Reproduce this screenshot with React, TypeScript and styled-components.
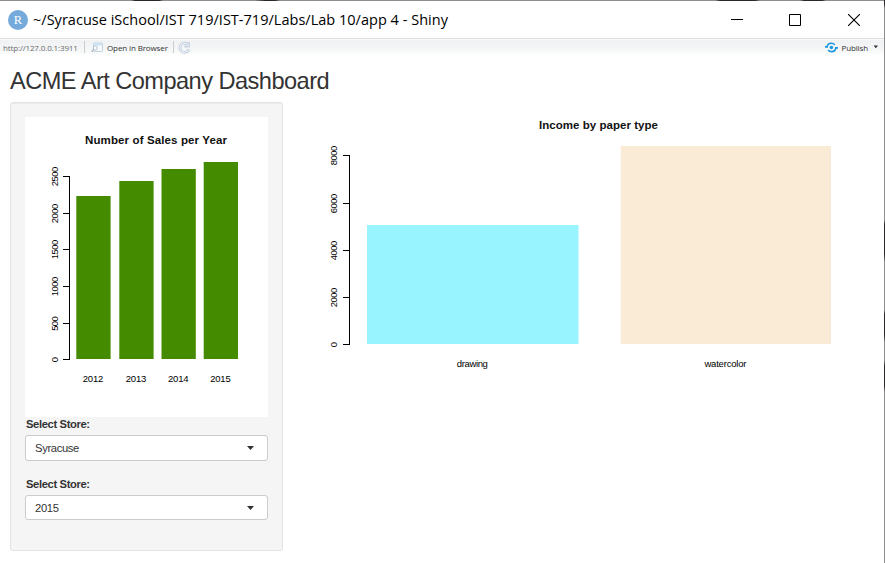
import React from "react";
import styled, { createGlobalStyle } from "styled-components";

const GlobalStyle = createGlobalStyle`
  html, body { margin: 0; padding: 0; background: #fff; overflow: hidden; }
  * { box-sizing: border-box; }
  svg { display: block; flex: none; }
`;

const Desktop = styled.div`
  width: 885px;
  height: 563px;
  padding: 1px 1px 0 0;
  background:
    linear-gradient(to right, #8e8e8e 0 131px, #2b2729 135px 159px, #8e8e8e 163px 255px, #2b2729 265px 275px, #8e8e8e 280px 715px, #2b2729 720px 755px, #8e8e8e 760px 800px, #2b2729 804px 822px, #8e8e8e 826px) 0 0 / 884px 1px no-repeat,
    linear-gradient(to bottom, #2b2729 0 4px, #8e8e8e 8px 220px, #2b2729 224px 254px, #8e8e8e 262px 310px, #2b2729 314px 335px, #8e8e8e 342px 360px, #2b2729 366px 386px, #8e8e8e 392px);
`;

const Window = styled.main`
  display: flex;
  flex-direction: column;
  height: 562px;
  background: #fff;
`;

const TitleBar = styled.header`
  display: flex;
  align-items: center;
  height: 37px;
  padding-left: 8px;
`;

const WindowTitle = styled.div`
  flex: 1;
  margin-left: 5px;
  font: 14.5px/20px "Open Sans", sans-serif;
  letter-spacing: 0.02px;
  color: #000;
  white-space: nowrap;
`;

const CaptionButtons = styled.div`
  display: grid;
  grid-template-columns: 58px 59px 12px;
  margin-right: 24px;
`;

const CaptionButton = styled.button`
  width: 12px;
  height: 12px;
  padding: 0;
  border: 0;
  background: none;
`;

const Toolbar = styled.nav`
  display: flex;
  align-items: center;
  height: 17px;
  padding: 0 6px 0 3px;
  border-top: 1px solid #dcdfe2;
  background: linear-gradient(#fafafb 0 1px, #f0f2f4 1px, #f2f4f5 8px, #fbfcfc 15px, #fff);
  font: 8px/16px "Open Sans", sans-serif;
  letter-spacing: -0.12px;
  color: #333;
`;

const Address = styled.span`
  width: 81px;
  padding-top: 1px;
  letter-spacing: -0.14px;
  color: #6a6a6a;
  white-space: nowrap;
`;

const Divider = styled.i`
  width: 1px;
  height: 12px;
  background: #c9cccf;
`;

const ToolButton = styled.button<{ $gap: number }>`
  display: flex;
  align-items: center;
  gap: ${(p) => p.$gap}px;
  padding: 0;
  border: 0;
  background: none;
  font: inherit;
  letter-spacing: inherit;
  color: inherit;
  white-space: nowrap;
`;

const ToolLabel = styled.span`
  padding-top: 1px;
`;

const OpenButton = styled(ToolButton)`
  width: 88px;
  padding-left: 6px;
`;

const ReloadButton = styled(ToolButton)`
  margin: 0 auto 0 4px;
`;

const Heading = styled.h1`
  margin: 12px 0 0 10px;
  font: 400 23.6px/28px "Liberation Sans", Arial, sans-serif;
  letter-spacing: -0.54px;
  color: #333;
  white-space: nowrap;
`;

const Columns = styled.div`
  display: flex;
  align-items: flex-start;
  margin: 7px 0 0 10px;
`;

const Well = styled.aside`
  width: 273px;
  height: 449px;
  padding: 14px 14px 0;
  border: 1px solid #e3e3e3;
  border-radius: 3px;
  background: #f5f5f5;
  box-shadow: inset 0 1px 1px rgba(0, 0, 0, 0.05);
`;

const PlotPanel = styled.div`
  width: 243px;
  height: 300px;
  background: #fff;
`;

const MainPanel = styled.section`
  margin: 15px 0 0 12px;
`;

const Field = styled.div<{ $height: number }>`
  display: flex;
  flex-direction: column;
  height: ${(p) => p.$height}px;
`;

const FieldLabel = styled.label`
  padding: 0 0 3px 1px;
  font: bold 11.2px/15px "Liberation Sans", Arial, sans-serif;
  letter-spacing: -0.36px;
  color: #333;
`;

const Select = styled.button<{ $height: number }>`
  display: flex;
  align-items: center;
  justify-content: space-between;
  width: 243px;
  height: ${(p) => p.$height}px;
  padding: 0 13px 0 9px;
  border: 1px solid #ccc;
  border-radius: 3px;
  background: #fff;
  font: 11.2px/16px "Liberation Sans", Arial, sans-serif;
  letter-spacing: -0.33px;
  color: #333;
`;

const ChartSvg = styled.svg`
  font-family: "Liberation Sans", Arial, sans-serif;
  font-size: 9.5px;
  fill: #000;
`;

type Tick = { label: string; y: number };
type Bar = { label: string; x: number; width: number; top: number; labelWidth: number };
type ChartProps = {
  width: number;
  title: string;
  titleX: number;
  titleY: number;
  titleWidth: number;
  axisX: number;
  tickX: number;
  base: number;
  ticks: Tick[];
  bars: Bar[];
  colors: string[];
  labelY: number;
};

function BarChart(c: ChartProps) {
  return (
    <ChartSvg width={c.width} height={300} role="img" aria-label={c.title}>
      <text x={c.titleX} y={c.titleY} fontSize={11.5} fontWeight="bold" textLength={c.titleWidth} fill="#111">
        {c.title}
      </text>
      <path
        d={`M${c.axisX + 0.5} ${c.ticks[c.ticks.length - 1].y}V${c.ticks[0].y + 1}${c.ticks
          .map((t) => `M${c.axisX - 6} ${t.y + 0.5}h7`)
          .join("")}`}
        fill="none"
        stroke="#000"
      />
      {c.ticks.map((t) => (
        <text
          key={t.label}
          transform={`translate(${c.tickX} ${t.y + 0.5}) rotate(-90)`}
          textAnchor="middle"
          textLength={t.label.length === 1 ? 5 : t.label.length * 5 - 0.5}
        >
          {t.label}
        </text>
      ))}
      {c.bars.map((b, i) => (
        <g key={b.label}>
          <rect x={b.x} y={b.top} width={b.width} height={c.base - b.top} fill={c.colors[i % c.colors.length]} />
          <text x={b.x + b.width / 2 - 0.4} y={c.labelY} textAnchor="middle" textLength={b.labelWidth}>
            {b.label}
          </text>
        </g>
      ))}
    </ChartSvg>
  );
}

function Caret() {
  return (
    <svg width="7" height="4" viewBox="0 0 7 4">
      <path d="M0 0h7L3.5 4z" fill="#333" />
    </svg>
  );
}

function AppIcon() {
  return (
    <svg width="20" height="20" viewBox="0 0 20 20">
      <circle cx="10" cy="10" r="10" fill="#75aadb" />
      <text x="10" y="14.2" textAnchor="middle" fontFamily="Liberation Serif, serif" fontSize="12.5" fill="#fff">
        R
      </text>
    </svg>
  );
}

function BrowserIcon() {
  return (
    <svg width="12" height="11" viewBox="0 0 12 11">
      <rect x="2.5" y="1" width="9" height="8.5" rx="1" fill="#f8fbfd" stroke="#c3d2df" />
      <path d="M3 1.5h8v2H3z" fill="#c7e2f4" />
      <circle cx="4.3" cy="6" r="2" fill="#fff" stroke="#b4c1cd" />
      <path d="M2.9 7.5L.7 9.7" stroke="#aab9c7" strokeWidth="1.4" />
    </svg>
  );
}

function ReloadIcon() {
  return (
    <svg width="13" height="13" viewBox="0 0 13 13" fill="none">
      <path d="M9.3 3A4.6 4.6 0 1 0 10.9 8.2" stroke="#b9c5d4" strokeWidth="2.7" />
      <path d="M9.3 3A4.6 4.6 0 1 0 10.9 8.2" stroke="#eef3f8" strokeWidth="1.2" />
      <path d="M11.4 1v5H6.5z" fill="#e3eaf1" stroke="#b9c5d4" strokeWidth=".8" />
    </svg>
  );
}

function PublishIcon() {
  return (
    <svg width="13" height="11" viewBox="0 0 13 11" fill="none">
      <circle cx="6.4" cy="5.4" r="1.75" fill="#1b98dd" />
      <path d="M0 4.9h3M2 4.8C2.5 2.4 4.3 1.2 6.3 1.2c1.4 0 2.6.6 3.5 1.6" stroke="#1b98dd" strokeWidth="1.6" />
      <path d="M13 5.9h-3M10.9 6c-.5 2.5-2.3 3.6-4.2 3.6-1.5 0-2.7-.5-3.6-1.6" stroke="#1b98dd" strokeWidth="1.6" />
    </svg>
  );
}

const salesTicks: Tick[] = [
  { label: "0", y: 242 },
  { label: "500", y: 206 },
  { label: "1000", y: 169 },
  { label: "1500", y: 132 },
  { label: "2000", y: 96 },
  { label: "2500", y: 59 },
];

const salesBars: Bar[] = [
  { label: "2012", x: 51.3, width: 34.3, top: 79, labelWidth: 20.5 },
  { label: "2013", x: 94.3, width: 34.3, top: 64, labelWidth: 20.5 },
  { label: "2014", x: 136.5, width: 34.3, top: 52, labelWidth: 20.5 },
  { label: "2015", x: 178.7, width: 34.3, top: 45, labelWidth: 20.5 },
];

const incomeTicks: Tick[] = [
  { label: "0", y: 227 },
  { label: "2000", y: 180 },
  { label: "4000", y: 133 },
  { label: "6000", y: 86 },
  { label: "8000", y: 38 },
];

const incomeBars: Bar[] = [
  { label: "drawing", x: 72, width: 211.5, top: 108, labelWidth: 31 },
  { label: "watercolor", x: 325.7, width: 210.3, top: 29, labelWidth: 42 },
];

export default function App() {
  return (
    <Desktop>
      <GlobalStyle />
      <Window>
        <TitleBar>
          <AppIcon />
          <WindowTitle>~/Syracuse iSchool/IST 719/IST-719/Labs/Lab 10/app 4 - Shiny</WindowTitle>
          <CaptionButtons>
            <CaptionButton aria-label="Minimize">
              <svg width="12" height="12"><path d="M0 5.5h12" stroke="#000" /></svg>
            </CaptionButton>
            <CaptionButton aria-label="Maximize">
              <svg width="12" height="12"><path d="M.5.5h11v11H.5z" fill="none" stroke="#000" /></svg>
            </CaptionButton>
            <CaptionButton aria-label="Close">
              <svg width="12" height="12"><path d="M0 0l12 12M12 0L0 12" stroke="#000" strokeWidth="1.1" /></svg>
            </CaptionButton>
          </CaptionButtons>
        </TitleBar>
        <Toolbar>
          <Address>http://127.0.0.1:3911</Address>
          <Divider />
          <OpenButton $gap={4}>
            <BrowserIcon />
            <ToolLabel>Open in Browser</ToolLabel>
          </OpenButton>
          <Divider />
          <ReloadButton $gap={0} aria-label="Reload">
            <ReloadIcon />
          </ReloadButton>
          <ToolButton $gap={3}>
            <PublishIcon />
            <ToolLabel>Publish</ToolLabel>
          </ToolButton>
          <ToolButton $gap={0} aria-label="Publish options">
            <svg width="10" height="4" viewBox="0 0 10 4"><path d="M5.6 0.5h4.4L7.8 3.2z" fill="#333" /></svg>
          </ToolButton>
        </Toolbar>
        <Heading>ACME Art Company Dashboard</Heading>
        <Columns>
          <Well>
            <PlotPanel>
              <BarChart
                width={243}
                title="Number of Sales per Year"
                titleX={60}
                titleY={27}
                titleWidth={142}
                axisX={44}
                tickX={32.5}
                base={242}
                ticks={salesTicks}
                bars={salesBars}
                colors={["#458b00"]}
                labelY={265}
              />
            </PlotPanel>
            <Field $height={60}>
              <FieldLabel>Select Store:</FieldLabel>
              <Select $height={26}>
                Syracuse
                <Caret />
              </Select>
            </Field>
            <Field $height={60}>
              <FieldLabel>Select Store:</FieldLabel>
              <Select $height={25}>
                2015
                <Caret />
              </Select>
            </Field>
          </Well>
          <MainPanel>
            <BarChart
              width={570}
              title="Income by paper type"
              titleX={244}
              titleY={12}
              titleWidth={119}
              axisX={54}
              tickX={42}
              base={227}
              ticks={incomeTicks}
              bars={incomeBars}
              colors={["#98f5ff", "#faebd7"]}
              labelY={250}
            />
          </MainPanel>
        </Columns>
      </Window>
    </Desktop>
  );
}
